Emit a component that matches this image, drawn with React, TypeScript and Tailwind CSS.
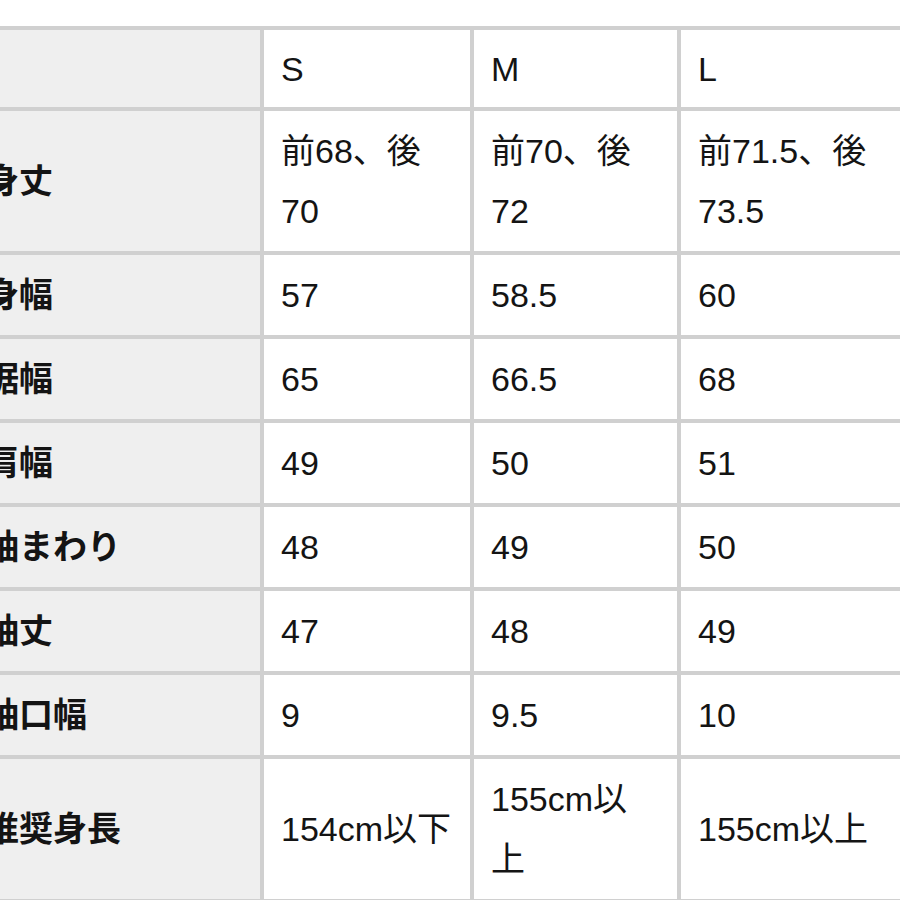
import React from 'react'

type Row = {
  label: string
  cells: string[][]
}

const rows: Row[] = [
  { label: '身丈', cells: [['前68、後', '70'], ['前70、後', '72'], ['前71.5、後', '73.5']] },
  { label: '身幅', cells: [['57'], ['58.5'], ['60']] },
  { label: '裾幅', cells: [['65'], ['66.5'], ['68']] },
  { label: '肩幅', cells: [['49'], ['50'], ['51']] },
  { label: '袖まわり', cells: [['48'], ['49'], ['50']] },
  { label: '袖丈', cells: [['47'], ['48'], ['49']] },
  { label: '袖口幅', cells: [['9'], ['9.5'], ['10']] },
  { label: '推奨身長', cells: [['154cm以下'], ['155cm以', '上'], ['155cm以上']] },
]

export default function App() {
  return (
    <div className="h-[900px] w-[900px] overflow-hidden bg-white pt-[26px] font-['Liberation_Sans','Noto_Sans_CJK_JP',sans-serif] text-[34px] leading-[60px] text-[#141414]">
      <table className="ml-[-35px] w-[950px] min-w-[950px] table-fixed border-separate border-spacing-1 bg-[#d0d0d0]">
        <colgroup>
          <col className="w-[291px]" />
          <col className="w-[206px]" />
          <col className="w-[203px]" />
          <col className="w-[230px]" />
        </colgroup>
        <thead>
          <tr>
            <th className="bg-[#efefef] pt-[9px] pb-[8px]" />
            {['S', 'M', 'L'].map((s) => (
              <th
                key={s}
                className="bg-white pt-[9px] pb-[8px] pl-[17px] text-left align-middle font-normal"
              >
                {s}
              </th>
            ))}
          </tr>
        </thead>
        <tbody>
          {rows.map((r) => (
            <tr key={r.label}>
              <th className="bg-[#efefef] py-[10px] pl-[16px] text-left align-middle font-bold whitespace-nowrap">
                {r.label}
              </th>
              {r.cells.map((lines, i) => (
                <td key={i} className="bg-white py-[10px] pl-[17px] align-middle whitespace-nowrap">
                  {lines.map((l, j) => (
                    <div key={j}>{l}</div>
                  ))}
                </td>
              ))}
            </tr>
          ))}
        </tbody>
      </table>
    </div>
  )
}
